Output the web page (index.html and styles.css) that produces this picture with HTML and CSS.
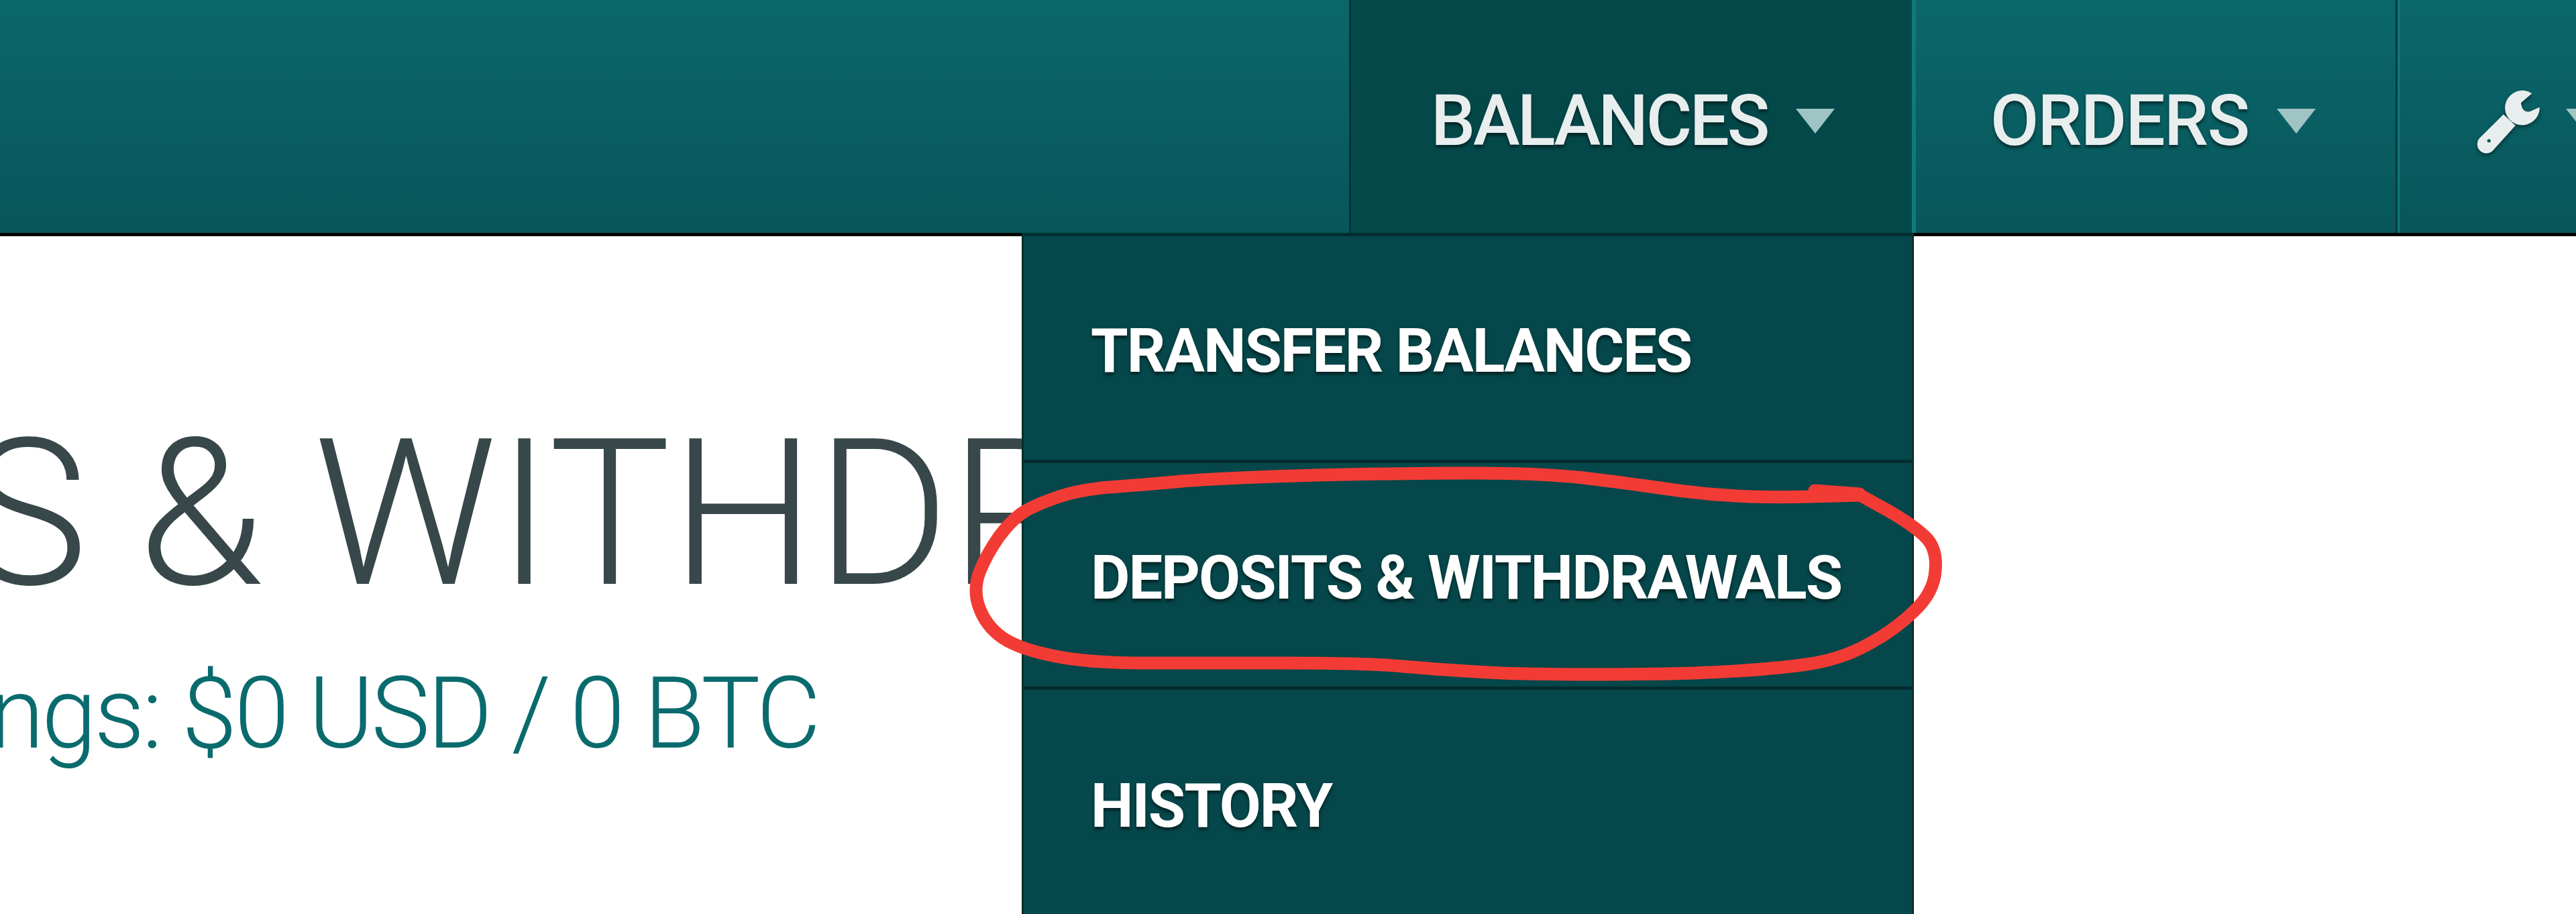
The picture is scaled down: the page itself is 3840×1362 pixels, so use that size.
FILE: index.html
```html
<!DOCTYPE html>
<html lang="en">
<head>
<meta charset="utf-8">
<title>Deposits &amp; Withdrawals</title>
<link rel="stylesheet" href="styles.css">
</head>
<body>
<header class="nav">
  <div class="nav-fill"></div>
  <div class="nav-item active">
    <span>BALANCES</span><i class="caret"></i>
    <ul class="menu">
      <li>TRANSFER BALANCES</li>
      <li>DEPOSITS &amp; WITHDRAWALS</li>
      <li>HISTORY</li>
    </ul>
  </div>
  <div class="nav-item orders"><span>ORDERS</span><i class="caret"></i></div>
  <div class="nav-item tools">
    <svg class="wrench" viewBox="260 100 300 300" aria-hidden="true">
      <path d="M515 122A79 79 0 1 0 550 185L505 205Q470 210 465 165Z"/>
      <path d="M385 218L280 322A40 40 0 0 0 335 385L440 268Z"/>
      <circle class="wrench-hole" cx="319" cy="338" r="8"/>
    </svg>
    <i class="caret"></i>
  </div>
</header>
<main class="content">
  <h1 class="title">DEPOSITS &amp; WITHDRAWALS</h1>
  <p class="holdings">Total Holdings: $0 USD / 0 BTC</p>
</main>
<svg class="scribble" viewBox="0 0 3840 1362" aria-hidden="true">
  <path d="M2705 731L2772 736M2773 738L2698 740Q2624 742 2574 738Q2524 735 2474 727Q2425 720 2360 712Q2296 705 2196 705Q2096 705 1962 708Q1828 712 1763 717Q1698 723 1653 726Q1609 730 1579 740Q1549 750 1529 761Q1509 773 1489 800Q1470 827 1460 853Q1450 880 1460 906Q1470 933 1494 950Q1519 967 1569 977Q1619 988 1708 988Q1798 988 1917 988Q2037 988 2091 993Q2146 998 2201 1001Q2256 1005 2375 1005Q2494 1005 2569 1001Q2644 997 2693 990Q2743 983 2783 961Q2823 940 2853 911Q2883 883 2885 850Q2888 817 2870 800Q2853 783 2813 760Q2773 738 2773 738"/>
</svg>
</body>
</html>
```
FILE: styles.css
```css
html, body {
  margin: 0;
  padding: 0;
  height: 100%;
  overflow: hidden;
  background: #fff;
  font-family: Roboto, "Liberation Sans", sans-serif;
}
.nav {
  display: flex;
  height: 352px;
  box-sizing: border-box;
  border-bottom: 5px solid #000;
  background: linear-gradient(#0b676b, #07565a);
}
.nav-fill { flex: 1; }
.nav-item {
  position: relative;
  display: flex;
  flex: none;
  align-items: center;
  box-sizing: border-box;
  height: 347px;
  padding-top: 14px;
  padding-bottom: 0;
  color: #e8eeee;
  font-size: 105px;
  font-weight: 500;
  letter-spacing: -1.8px;
  text-shadow: 0 4px 4px rgba(0, 0, 0, .5);
  border-left: 3px solid #0f7a7e;
  border-right: 3px solid #04393c;
}
.active {
  width: 842px;
  padding-left: 119px;
  letter-spacing: -3.4px;
  background: #05484a;
  border-left-color: #043639;
  border-right-color: #0f7a7e;
  box-shadow: 0 5px 0 #022f31;
}
.orders { width: 721px; padding-left: 111px; }
.tools { width: 266px; padding-left: 114px; border-right: 0; }
.caret {
  flex: none;
  width: 0;
  height: 0;
  margin: 0 0 0 42px;
  border-left: 29px solid transparent;
  border-right: 29px solid transparent;
  border-top: 37px solid #a0c3c3;
}
.wrench {
  flex: none;
  width: 98px;
  height: 98px;
  fill: #e8eeee;
  filter: drop-shadow(0 3px 3px rgba(0, 0, 0, .45));
}
.wrench-hole { fill: #07585c; }
.tools .caret { margin-left: 36px; }
.menu {
  position: absolute;
  top: 347px;
  right: -3px;
  z-index: 2;
  width: 1330px;
  height: 1015px;
  box-sizing: border-box;
  margin: 0;
  padding: 0;
  list-style: none;
  background: #05474a;
  border-top: 5px solid #022f31;
  border-left: 3px solid #03302f;
  border-right: 3px solid #03302f;
  color: #fff;
  font-size: 90px;
  font-weight: 700;
  letter-spacing: -2px;
  line-height: 1;
}
.menu li {
  display: flex;
  align-items: center;
  box-sizing: border-box;
  height: 338px;
  padding: 10px 0 0 100px;
  border-bottom: 5px solid #032c2e;
}
.menu li:last-child { border-bottom: 0; }
.content {
  white-space: nowrap;
}
.title {
  margin: 261px 0 0 -1255px;
  font-size: 305px;
  font-weight: 300;
  line-height: 1;
  color: #37474a;
}
.holdings {
  margin: 57px 0 0 -670px;
  font-size: 148px;
  font-weight: 300;
  letter-spacing: -3.85px;
  line-height: 1.2;
  color: #0a6b6e;
}
.scribble {
  position: absolute;
  inset: 0;
  z-index: 3;
  width: 3840px;
  height: 1362px;
  fill: none;
  stroke: #f33b35;
  stroke-width: 19px;
  stroke-linecap: round;
  stroke-linejoin: round;
}
```
